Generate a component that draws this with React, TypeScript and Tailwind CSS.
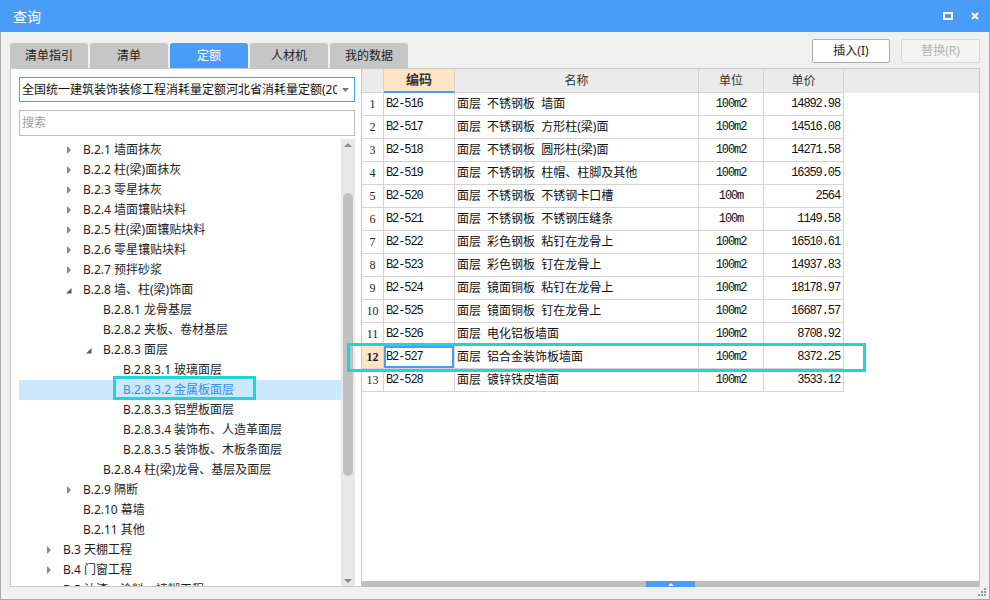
import React from 'react';

type Node = { lvl: 1 | 2 | 3 | 4; text: string; arrow?: 'c' | 'e'; sel?: boolean };

const tree: Node[] = [
  { lvl: 2, text: 'B.2.1 墙面抹灰', arrow: 'c' },
  { lvl: 2, text: 'B.2.2 柱(梁)面抹灰', arrow: 'c' },
  { lvl: 2, text: 'B.2.3 零星抹灰', arrow: 'c' },
  { lvl: 2, text: 'B.2.4 墙面镶贴块料', arrow: 'c' },
  { lvl: 2, text: 'B.2.5 柱(梁)面镶贴块料', arrow: 'c' },
  { lvl: 2, text: 'B.2.6 零星镶贴块料', arrow: 'c' },
  { lvl: 2, text: 'B.2.7 预拌砂浆', arrow: 'c' },
  { lvl: 2, text: 'B.2.8 墙、柱(梁)饰面', arrow: 'e' },
  { lvl: 3, text: 'B.2.8.1 龙骨基层' },
  { lvl: 3, text: 'B.2.8.2 夹板、卷材基层' },
  { lvl: 3, text: 'B.2.8.3 面层', arrow: 'e' },
  { lvl: 4, text: 'B.2.8.3.1 玻璃面层' },
  { lvl: 4, text: 'B.2.8.3.2 金属板面层', sel: true },
  { lvl: 4, text: 'B.2.8.3.3 铝塑板面层' },
  { lvl: 4, text: 'B.2.8.3.4 装饰布、人造革面层' },
  { lvl: 4, text: 'B.2.8.3.5 装饰板、木板条面层' },
  { lvl: 3, text: 'B.2.8.4 柱(梁)龙骨、基层及面层' },
  { lvl: 2, text: 'B.2.9 隔断', arrow: 'c' },
  { lvl: 2, text: 'B.2.10 幕墙' },
  { lvl: 2, text: 'B.2.11 其他' },
  { lvl: 1, text: 'B.3 天棚工程', arrow: 'c' },
  { lvl: 1, text: 'B.4 门窗工程', arrow: 'c' },
  { lvl: 1, text: 'B.5 油漆、涂料、裱糊工程', arrow: 'c' },
];

const indent = { 1: 'pl-[27px]', 2: 'pl-[47px]', 3: 'pl-[67px]', 4: 'pl-[87px]' };

const rows = [
  ['B2-516', '面层 不锈钢板 墙面', '100m2', '14892.98'],
  ['B2-517', '面层 不锈钢板 方形柱(梁)面', '100m2', '14516.08'],
  ['B2-518', '面层 不锈钢板 圆形柱(梁)面', '100m2', '14271.58'],
  ['B2-519', '面层 不锈钢板 柱帽、柱脚及其他', '100m2', '16359.05'],
  ['B2-520', '面层 不锈钢板 不锈钢卡口槽', '100m', '2564'],
  ['B2-521', '面层 不锈钢板 不锈钢压缝条', '100m', '1149.58'],
  ['B2-522', '面层 彩色钢板 粘钉在龙骨上', '100m2', '16510.61'],
  ['B2-523', '面层 彩色钢板 钉在龙骨上', '100m2', '14937.83'],
  ['B2-524', '面层 镜面铜板 粘钉在龙骨上', '100m2', '18178.97'],
  ['B2-525', '面层 镜面铜板 钉在龙骨上', '100m2', '16687.57'],
  ['B2-526', '面层 电化铝板墙面', '100m2', '8708.92'],
  ['B2-527', '面层 铝合金装饰板墙面', '100m2', '8372.25'],
  ['B2-528', '面层 镀锌铁皮墙面', '100m2', '3533.12'],
];

const tabs = ['清单指引', '清单', '定额', '人材机', '我的数据'];

const mono = "font-['Liberation_Mono',monospace] text-[12px] tracking-[-1.1px] text-[#111]";
const cell = 'border-r border-b border-[#d4d4d4] flex items-center';

function TitleBar() {
  return (
    <div className="h-[32px] bg-[#4a9cf9] flex items-center pl-[13px] pr-[11px] text-white text-[14px]">
      <span>查询</span>
      <div className="ml-auto flex items-center gap-[18px]">
        <svg width="10" height="8" viewBox="0 0 10 8">
          <rect x="1" y="1" width="8" height="6" fill="none" stroke="white" strokeWidth="2" />
        </svg>
        <svg width="8" height="8" viewBox="0 0 8 8">
          <path d="M1 1 L7 7 M7 1 L1 7" stroke="white" strokeWidth="2" />
        </svg>
      </div>
    </div>
  );
}

function Arrow({ kind }: { kind?: 'c' | 'e' }) {
  return (
    <div className="w-[17px] h-full flex items-center shrink-0">
      {kind === 'c' && (
        <svg width="5" height="8" viewBox="0 0 5 8" className="ml-[1px]">
          <polygon points="0,0 4,4 0,8" fill="#8a8a8a" />
        </svg>
      )}
      {kind === 'e' && (
        <svg width="6" height="6" viewBox="0 0 6 6" className="mt-[1px]">
          <polygon points="5.5,0 5.5,5.5 0,5.5" fill="#595959" />
        </svg>
      )}
    </div>
  );
}

function LeftPanel() {
  return (
    <div className="w-[351px] h-full border-l border-t border-b border-[#c9c9c9] bg-white flex flex-col pt-[8px] pl-[8px] pr-[6px]">
      <div className="h-[25px] border border-[#4a9cf9] flex items-center shrink-0">
        <span className="pl-[2px] w-[317px] overflow-hidden whitespace-nowrap text-[#111]">全国统一建筑装饰装修工程消耗量定额河北省消耗量定额(2013)</span>
        <svg width="7" height="4" viewBox="0 0 7 4" className="ml-auto mr-[5px]">
          <polygon points="0,0 7,0 3.5,4" fill="#7a7a7a" />
        </svg>
      </div>
      <div className="mt-[8px] h-[26px] border border-[#bcbcbc] flex items-center pl-[2px] text-[#a0a0a0] shrink-0">搜索</div>
      <div className="mt-[3px] flex-1 min-h-0 flex overflow-hidden">
        <div className="flex-1 overflow-hidden pt-[1px]">
          {tree.map((n, i) => (
            <div
              key={i}
              className={`h-[20px] flex items-center whitespace-nowrap ${indent[n.lvl]} ${n.sel ? 'bg-[#cce8ff] text-[#3a8ee2]' : ''}`}
            >
              <Arrow kind={n.arrow} />
              <span>{n.text}</span>
            </div>
          ))}
        </div>
        <div className="w-[14px] bg-[#e8e8e8] flex flex-col items-center pt-[4px]">
          <svg width="8" height="4" viewBox="0 0 8 4">
            <polygon points="0,4 8,4 4,0" fill="#8a8a8a" />
          </svg>
          <div className="mt-[46px] w-[10px] h-[283px] rounded-full bg-[#c1c1c1]" />
          <svg width="8" height="4" viewBox="0 0 8 4" className="mt-auto mb-[3px]">
            <polygon points="0,0 8,0 4,4" fill="#8a8a8a" />
          </svg>
        </div>
      </div>
    </div>
  );
}

function RightPanel() {
  return (
    <div className="flex-1 h-full flex flex-col border-l border-t border-r border-[#c9c9c9] bg-white">
      <div className="flex-1 min-h-0">
        <div className="flex h-[24px] text-[#333] bg-[#ebebeb]">
          <div className={`${cell} w-[22px]`} />
          <div className="w-[71px] border-r border-[#d4d4d4] border-b-2 border-b-[#4a9cf9] bg-[#ffe5c6] flex items-center justify-center font-bold text-[13px]">编码</div>
          <div className={`${cell} w-[244px] justify-center`}>名称</div>
          <div className={`${cell} w-[65px] justify-center`}>单位</div>
          <div className={`${cell} w-[80px] justify-center`}>单价</div>
        </div>
        {rows.map((r, i) => {
          const sel = i === 11;
          return (
            <div key={i} className="flex h-[23px]">
              <div className={`${cell} w-[22px] justify-center font-['Liberation_Serif',serif] text-[12px] ${sel ? 'bg-[#ffe5c6] font-bold' : ''}`}>{i + 1}</div>
              <div className={`${cell} w-[71px] pl-[2px] ${mono} ${sel ? 'shadow-[inset_0_0_0_2px_#4a9cf9]' : ''}`}>{r[0]}</div>
              <div className={`${cell} w-[244px] pl-[2px] whitespace-nowrap [word-spacing:3px] text-[#111]`}>{r[1]}</div>
              <div className={`${cell} w-[65px] justify-center ${mono}`}>{r[2]}</div>
              <div className={`${cell} w-[80px] justify-end pr-[3px] ${mono}`}>{r[3]}</div>
            </div>
          );
        })}
      </div>
      <div className="h-[6px] bg-[#bfbfbf] flex shrink-0">
        <div className="ml-[284px] w-[49px] h-full bg-[#4a9cf9] flex items-center justify-center">
          <svg width="6" height="3" viewBox="0 0 6 3">
            <polygon points="0,3 6,3 3,0" fill="white" />
          </svg>
        </div>
      </div>
    </div>
  );
}

export default function App() {
  return (
    <div className="relative w-[990px] h-[600px] overflow-hidden bg-[#f0f0f0] font-['Noto_Sans','Noto_Sans_CJK_SC',sans-serif] text-[12px] text-[#1e1e1e]">
      <TitleBar />
      <div className="relative h-[568px] flex flex-col border-x border-b border-[#a9a9a9] px-[9px] pb-[12px]">
        <div className="flex h-[36px] items-end justify-between shrink-0">
          <div className="flex gap-[2px]">
            {tabs.map((t) => (
              <div
                key={t}
                className={`w-[78px] h-[25px] rounded-t-[3px] flex items-center justify-center ${t === '定额' ? 'bg-[#4a9cf9] text-white' : 'bg-[#c6c6c6] text-[#222]'}`}
              >
                {t}
              </div>
            ))}
          </div>
          <div className="flex mb-[5px]">
            <button className="w-[78px] h-[24px] border border-[#adadad] bg-white rounded-[2px] text-[#222]">插入(I)</button>
            <button className="ml-[11px] w-[79px] h-[24px] border border-[#d9d9d9] bg-[#f4f4f4] rounded-[2px] text-[#b4b4b4]">替换(R)</button>
          </div>
        </div>
        <div className="flex h-[519px]">
          <LeftPanel />
          <RightPanel />
        </div>
        <svg width="10" height="10" viewBox="0 0 10 10" className="absolute right-[2px] bottom-[2px]">
          <rect x="7" y="1" width="2" height="2" fill="#9a9a9a" />
          <rect x="4" y="4" width="2" height="2" fill="#9a9a9a" />
          <rect x="7" y="4" width="2" height="2" fill="#9a9a9a" />
          <rect x="1" y="7" width="2" height="2" fill="#9a9a9a" />
          <rect x="4" y="7" width="2" height="2" fill="#9a9a9a" />
          <rect x="7" y="7" width="2" height="2" fill="#9a9a9a" />
        </svg>
      </div>
      <div className="absolute left-[113px] top-[376px] w-[143px] h-[24px] border-[3px] border-[#1fd5d6] pointer-events-none" />
      <div className="absolute left-[347px] top-[343px] w-[519px] h-[29px] border-[3px] border-[#1fd5d6] pointer-events-none" />
    </div>
  );
}
